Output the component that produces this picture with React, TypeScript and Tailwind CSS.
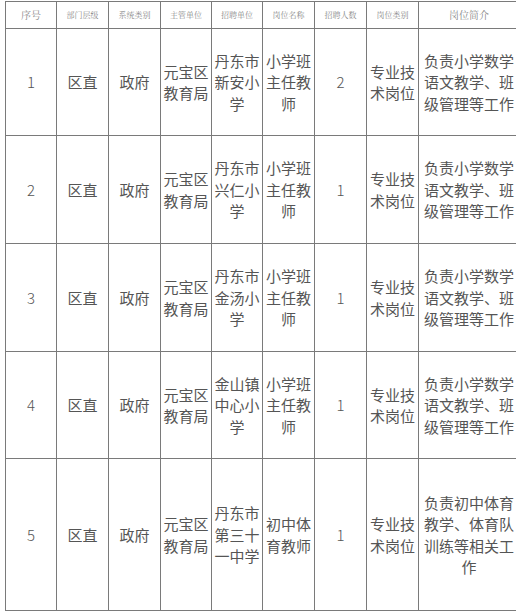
import React from "react";

const rows = [
  { no: "1", unit: "丹东市新安小学", pos: "小学班主任教师", n: "2", desc: "负责小学数学语文教学、班级管理等工作", h: "h-[107px]" },
  { no: "2", unit: "丹东市兴仁小学", pos: "小学班主任教师", n: "1", desc: "负责小学数学语文教学、班级管理等工作", h: "h-[108px]" },
  { no: "3", unit: "丹东市金汤小学", pos: "小学班主任教师", n: "1", desc: "负责小学数学语文教学、班级管理等工作", h: "h-[108px]" },
  { no: "4", unit: "金山镇中心小学", pos: "小学班主任教师", n: "1", desc: "负责小学数学语文教学、班级管理等工作", h: "h-[107px]" },
  { no: "5", unit: "丹东市第三十一中学", pos: "初中体育教师", n: "1", desc: "负责初中体育教学、体育队训练等相关工作", h: "h-[152px]" },
];

const headers = ["序号", "部门层级", "系统类别", "主管单位", "招聘单位", "岗位名称", "招聘人数", "岗位类别", "岗位简介"];

export default function App() {
  const cell = "border border-[#7a7a7a] text-center align-middle px-0 py-0";
  return (
    <div className="w-[516px] h-[612px] overflow-hidden bg-white" style={{ fontFamily: '"Noto Sans CJK SC", "Noto Sans", sans-serif' }}>
      <table className="table-fixed border-collapse w-[514px] ml-[5px] mt-[1px] text-[#555] text-[15px] leading-[21.5px]">
        <colgroup>
          <col className="w-[51px]" />
          <col className="w-[52px]" />
          <col className="w-[52px]" />
          <col className="w-[51px]" />
          <col className="w-[51px]" />
          <col className="w-[52px]" />
          <col className="w-[52px]" />
          <col className="w-[52px]" />
          <col className="w-[101px]" />
        </colgroup>
        <thead>
          <tr className="h-[27px]">
            {headers.map((h, i) => (
              <th
                key={h}
                className={`${cell} font-normal text-[#888] leading-[12px] ${i === 0 || i === 8 ? "text-[10px]" : "text-[8px]"}`}
                style={{ fontFamily: '"Noto Serif CJK SC", "Noto Sans CJK SC", serif' }}
              >
                {h}
              </th>
            ))}
          </tr>
        </thead>
        <tbody>
          {rows.map((r) => (
            <tr key={r.no} className={r.h}>
              <td className={`${cell} font-light`}>{r.no}</td>
              <td className={cell}>区直</td>
              <td className={cell}>政府</td>
              <td className={cell}>元宝区教育局</td>
              <td className={cell}>{r.unit}</td>
              <td className={cell}>{r.pos}</td>
              <td className={`${cell} font-light`}>{r.n}</td>
              <td className={cell}>专业技术岗位</td>
              <td className={`${cell} px-[4px]`}>{r.desc}</td>
            </tr>
          ))}
        </tbody>
      </table>
    </div>
  );
}
